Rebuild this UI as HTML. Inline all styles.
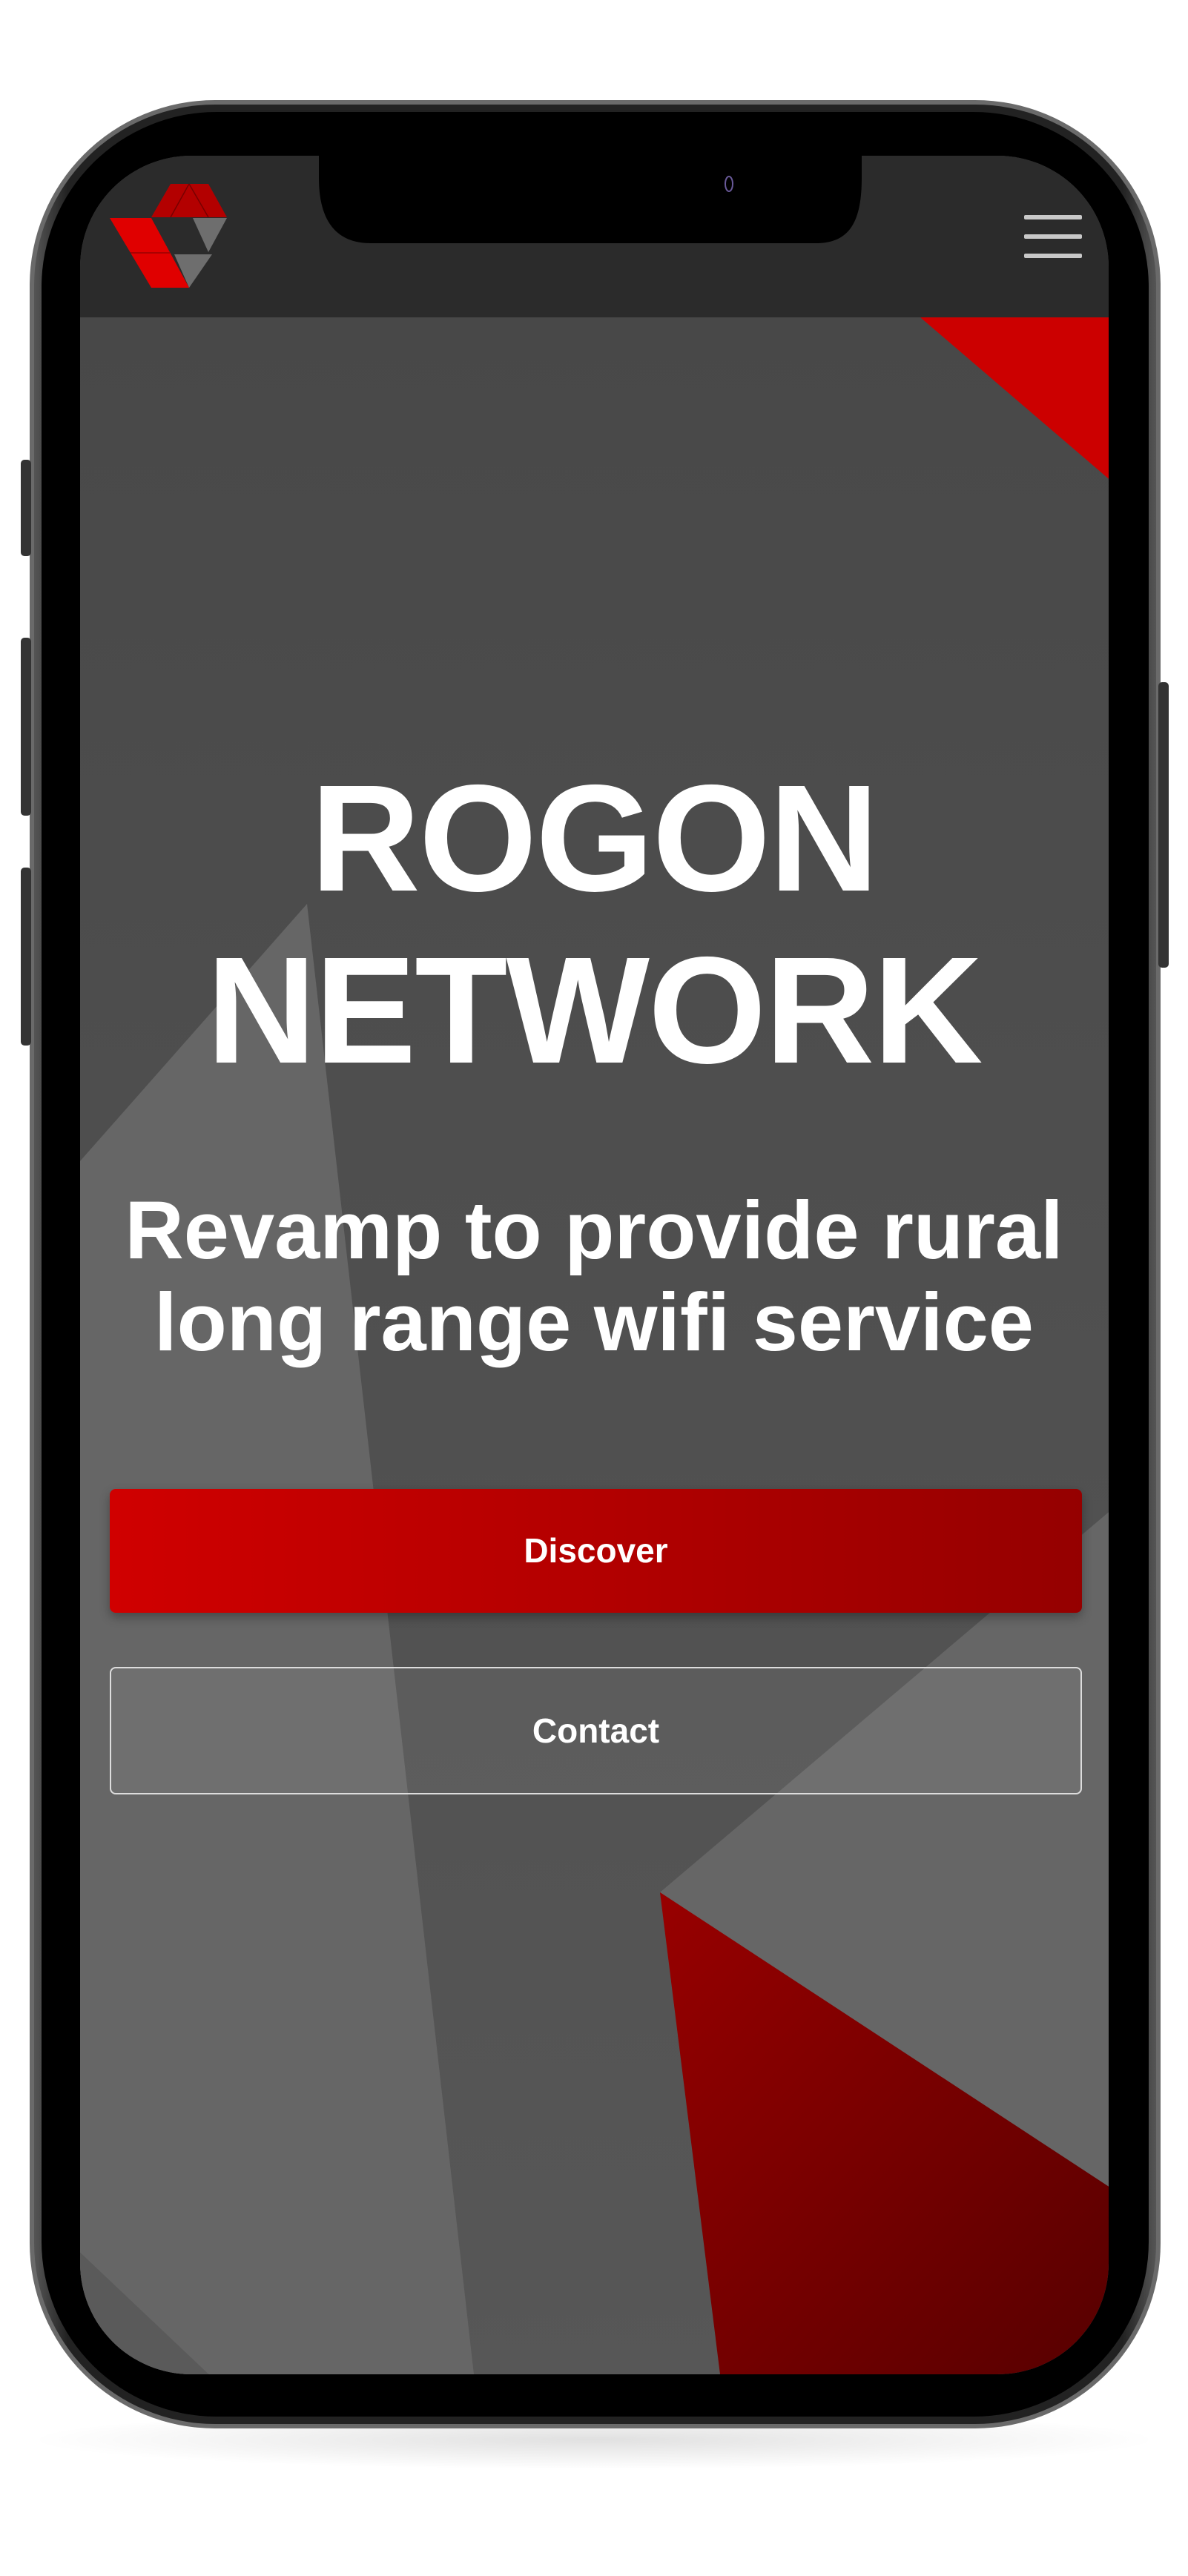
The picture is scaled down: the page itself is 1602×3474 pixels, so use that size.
<!DOCTYPE html>
<html><head><meta charset="utf-8"><style>
html,body{margin:0;padding:0;background:#fff;}
body{width:1602px;height:3474px;position:relative;overflow:hidden;font-family:"Liberation Sans",sans-serif;}
.t{position:absolute;left:0;width:1602px;text-align:center;color:#fff;font-weight:bold;white-space:nowrap;}
.btn{position:absolute;left:148px;width:1311px;border-radius:8px;box-sizing:border-box;color:#fff;text-align:center;font-size:46px;font-weight:bold;font-family:"Liberation Sans",sans-serif;}
</style></head><body>
<svg width="1602" height="3474" style="position:absolute;left:0;top:0" xmlns="http://www.w3.org/2000/svg">
<defs>
<clipPath id="scr"><rect x="108" y="210" width="1387" height="2992" rx="150" ry="150"/></clipPath>
<linearGradient id="bg" x1="0" y1="0" x2="0" y2="1"><stop offset="0" stop-color="#474747"/><stop offset="1" stop-color="#575757"/></linearGradient>
<linearGradient id="rd" x1="0" y1="0" x2="1" y2="1"><stop offset="0" stop-color="#980000"/><stop offset="1" stop-color="#560000"/></linearGradient>
<linearGradient id="frame" x1="0" y1="0" x2="1" y2="0"><stop offset="0" stop-color="#555"/><stop offset="0.03" stop-color="#222"/><stop offset="0.97" stop-color="#222"/><stop offset="1" stop-color="#555"/></linearGradient>
<radialGradient id="sh" cx="0.5" cy="0.5" r="0.5"><stop offset="0" stop-color="#000" stop-opacity="0.12"/><stop offset="1" stop-color="#000" stop-opacity="0"/></radialGradient>
</defs>
<ellipse cx="801" cy="3290" rx="760" ry="40" fill="url(#sh)"/>
<rect x="40" y="135" width="1525" height="3140" rx="250" ry="250" fill="#6a6a6a"/>
<rect x="46" y="141" width="1513" height="3128" rx="244" ry="244" fill="url(#frame)"/>
<rect x="56" y="151" width="1493" height="3108" rx="236" ry="236" fill="#000"/>
<rect x="28" y="620" width="14" height="130" rx="5" fill="#333"/>
<rect x="28" y="860" width="14" height="240" rx="5" fill="#333"/>
<rect x="28" y="1170" width="14" height="240" rx="5" fill="#333"/>
<rect x="1562" y="920" width="14" height="385" rx="5" fill="#333"/>
<g clip-path="url(#scr)">
<rect x="100" y="200" width="1410" height="3010" fill="url(#bg)"/>
<polygon points="414,1219 639,3202 100,3202 100,1575" fill="#666"/>
<polygon points="100,3030 290,3210 100,3210" fill="#5a5a5a"/>
<polygon points="890,2552 1500,2035 1500,2952" fill="#666"/>
<polygon points="890,2552 1500,2952 1500,3210 972,3210" fill="url(#rd)"/>
<polygon points="1241,428 1500,428 1500,650" fill="#cc0000"/>
<rect x="100" y="200" width="1410" height="228" fill="#2b2b2b"/>
</g>
<path d="M430,200 L430,240 C430,300 455,328 500,328 L1100,328 C1145,328 1162,300 1162,240 L1162,200 Z" fill="#000"/>
<ellipse cx="983" cy="248" rx="5" ry="10" fill="none" stroke="#6a5a9a" stroke-width="2"/>
<polygon points="230,248 281,248 306,293 204,293" fill="#b30000"/>
<line x1="255" y1="248" x2="230" y2="293" stroke="#700" stroke-width="1.5"/>
<line x1="255" y1="248" x2="281" y2="293" stroke="#700" stroke-width="1.5"/>
<polygon points="148,294 204,294 255,388 204,388" fill="#e00000"/>
<line x1="176" y1="341" x2="229" y2="341" stroke="#900" stroke-width="1.5"/>
<polygon points="260,294 306,294 281,340" fill="#6e6e6e"/>
<polygon points="235,343 286,343 255,388" fill="#6e6e6e"/>
<rect x="1381" y="290" width="78" height="6" rx="2" fill="#c8c8c8"/>
<rect x="1381" y="316" width="78" height="6" rx="2" fill="#c8c8c8"/>
<rect x="1381" y="342" width="78" height="6" rx="2" fill="#c8c8c8"/>
</svg>
<div class="t" style="top:1015px;font-size:205px;line-height:232px;letter-spacing:-2px;">ROGON<br>NETWORK</div>
<div class="t" style="top:1598px;font-size:110px;line-height:124px;">Revamp to provide rural<br>long range wifi service</div>
<div class="btn" style="top:2008px;height:167px;line-height:167px;background:linear-gradient(90deg,#d00000,#950000);box-shadow:0 6px 14px rgba(0,0,0,0.3);">Discover</div>
<div class="btn" style="top:2248px;height:172px;line-height:168px;border:2px solid #ddd;background:rgba(255,255,255,0.06);">Contact</div>
</body></html>
